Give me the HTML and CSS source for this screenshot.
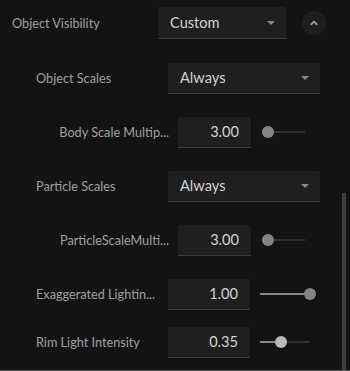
FILE: index.html
```html
<!DOCTYPE html>
<html>
<head>
<meta charset="utf-8">
<link rel="stylesheet" href="styles.css">
</head>
<body>
<div class="panel">
  <div class="row row-top">
    <span class="label">Object Visibility</span>
    <div class="select select-top"><span>Custom</span><i class="caret"></i></div>
    <button class="round"><svg width="10" height="6" viewBox="0 0 10 6"><path d="M1.8 4.8 L5 1.6 L8.2 4.8" fill="none" stroke="#9a9a9a" stroke-width="1.8"/></svg></button>
  </div>
  <div class="row row-l1 first-sub">
    <span class="label">Object Scales</span>
    <div class="select select-sub"><span>Always</span><i class="caret"></i></div>
  </div>
  <div class="row row-l2">
    <span class="label label-r">Body Scale Multip...</span>
    <div class="num num-sm">3.00</div>
    <div class="slider slider-sm"><div class="track"></div><div class="knob" style="left:0px"></div></div>
  </div>
  <div class="row row-l1">
    <span class="label">Particle Scales</span>
    <div class="select select-sub"><span>Always</span><i class="caret"></i></div>
  </div>
  <div class="row row-l2">
    <span class="label label-r">ParticleScaleMulti...</span>
    <div class="num num-sm">3.00</div>
    <div class="slider slider-sm"><div class="track"></div><div class="knob" style="left:0px"></div></div>
  </div>
  <div class="row row-l1">
    <span class="label label-w">Exaggerated Lightin...</span>
    <div class="num num-lg">1.00</div>
    <div class="slider slider-lg"><div class="track"><div class="fill" style="width:100%"></div></div><div class="knob" style="left:44px"></div></div>
  </div>
  <div class="row row-l1 last">
    <span class="label label-w">Rim Light Intensity</span>
    <div class="num num-lg">0.35</div>
    <div class="slider slider-lg"><div class="track"><div class="fill" style="width:15px"></div></div><div class="knob knob-hot" style="left:15px"></div></div>
  </div>
  <div class="scrollbar"></div>
</div>
</body>
</html>
```

FILE: styles.css
```css
* { box-sizing: border-box; }
html, body { margin: 0; padding: 0; background: #131313; }
body { width: 350px; height: 371px; overflow: hidden; font-family: Lato, "Open Sans", sans-serif; }
.panel {
  position: relative;
  height: 371px;
  border-bottom: 1px solid #555;
  display: flex;
  flex-direction: column;
  gap: 22px;
  padding-top: 7px;
}
.row { display: flex; align-items: center; height: 32px; flex: none; }
.label { color: #a0a0a0; font-size: 12.7px; white-space: nowrap; }
.row-top { padding-left: 12px; }
.row-top .label { width: 146px; }
.row-l1 { padding-left: 36px; }
.row-l1 .label { width: 132px; }
.row-l2 { padding-left: 36px; }
.row-l2 .label { width: 133px; text-align: right; }
.first-sub { margin-top: 1px; }
.last { margin-top: -6px; }
.select {
  height: 32px;
  background: #1f1f1f;
  border-radius: 3px 3px 0 0;
  border-bottom: 1px solid #3c3c3c;
  display: flex;
  align-items: center;
  justify-content: space-between;
  padding: 0 11px 0 12px;
  color: #d2d2d2;
  font-size: 14.6px;
}
.select-top { width: 128px; }
.select-sub { width: 152px; height: 31px; }
.caret {
  width: 0; height: 0;
  border-left: 4.5px solid transparent;
  border-right: 4.5px solid transparent;
  border-top: 4.5px solid #8a8a8a;
}
.round {
  margin-left: 16px;
  width: 24px; height: 24px;
  border-radius: 50%;
  border: none;
  background: #1f1f1f;
  padding: 0;
  display: flex;
  align-items: center;
  justify-content: center;
}
.num {
  height: 31px;
  background: #1f1f1f;
  border-radius: 3px 3px 0 0;
  border-bottom: 1px solid #3c3c3c;
  color: #d2d2d2;
  font-size: 14.6px;
  display: flex;
  align-items: center;
  justify-content: flex-end;
  padding-right: 12px;
}
.row-l2 .num { margin-left: 9px; }
.num-sm { width: 73px; }
.num-lg { width: 82px; }
.slider { position: relative; height: 12px; }
.slider-sm { margin-left: 11px; width: 43px; }
.slider-lg { margin-left: 10px; width: 56px; }
.track {
  position: absolute; left: 0; right: 0; top: 5px; height: 2px;
  background: #303030;
}
.slider-lg .track { right: 6px; }
.fill { height: 2px; background: #8a8a8a; }
.knob {
  position: absolute; top: 0;
  width: 12px; height: 12px; border-radius: 50%;
  background: #858585;
}
.knob-hot { background: #b8b8b8; }
.scrollbar {
  position: absolute;
  left: 342px; top: 193px; bottom: 0;
  width: 4px;
  background: #3e3e3e;
}
```
